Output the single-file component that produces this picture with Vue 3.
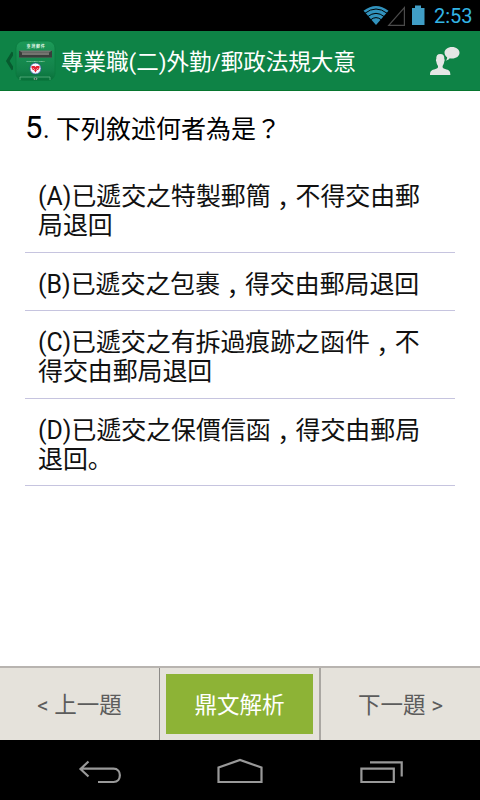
<script setup>
const options = [
  [['(A)', '已遞交之特製郵簡', '，', '不得交由郵'], ['', '局退回', '', '']],
  [['(B)', '已遞交之包裹', '，', '得交由郵局退回']],
  [['(C)', '已遞交之有拆過痕跡之函件', '，', '不'], ['', '得交由郵局退回', '', '']],
  [['(D)', '已遞交之保價信函', '，', '得交由郵局'], ['', '退回。', '', '']],
]
</script>

<template>
  <div class="screen">
    <div class="status">
      <svg class="status-icons" width="64" height="31" viewBox="0 0 64 31">
        <path fill="#3192bd" d="M0.500 10.800Q13 1.200 25.500 10.800L13 25Z" />
        <g fill="none" stroke="#000" stroke-width="1">
          <path d="M1.800 13.300Q13 4.700 24.200 13.300" />
          <path d="M4.600 16.700Q13 10 21.400 16.700" />
          <path d="M7.400 20Q13 15.200 18.600 20" />
        </g>
        <path fill="none" stroke="#4b4b4b" stroke-width="1.200" d="M41.400 7.500V25.300H25.700Z" />
        <path fill="#409ec6" d="M49 8h3V5.500h6V8h3.500v17H49Z" />
      </svg>
      <span class="clock">2:53</span>
    </div>

    <header class="bar">
      <svg class="chevron" width="12" height="20" viewBox="0 0 12 20">
        <path fill="none" stroke="#075b2f" stroke-width="3.200" d="M12 1.500L6.800 10L12 18.500" />
      </svg>
      <svg class="logo" width="42" height="42" viewBox="0 0 42 42">
        <defs>
          <linearGradient id="shell" x1="0" y1="0" x2="0" y2="1">
            <stop offset="0" stop-color="#1d9a58" />
            <stop offset=".75" stop-color="#128149" />
            <stop offset="1" stop-color="#087039" />
          </linearGradient>
        </defs>
        <rect x="1" y="1" width="39" height="39.500" rx="7" fill="url(#shell)" stroke="#0a793e" stroke-width=".7" />
        <text x="21" y="8" text-anchor="middle" font-size="4" font-weight="700" letter-spacing=".7" fill="#e5f7e9">臺灣郵件</text>
        <path fill="#71726f" d="M4 10.500h33v7H4Z" />
        <path fill="#393e3b" d="M4 10.500l3 2h27l3-2v7H4Z" />
        <path fill="#747570" d="M7 12.500h27V15H7Z" />
        <text x="20.500" y="22" text-anchor="middle" font-size="2.500" fill="#b8e2c6">ORDINARY MAIL</text>
        <circle cx="20.500" cy="28.500" r="5.500" fill="#f4f7fb" stroke="#284b9e" stroke-width=".7" />
        <path fill="#e32234" d="M16.500 26h3.200l.8 1 .8-1h3.200v2l-1 1v1h-1.500L20.500 32.500 19 30h-1.500v-1l-1-1Z" />
        <path stroke="#f1d9de" stroke-width=".6" d="M18 28l2 2M23 28l-2 2" />
        <path fill="none" stroke="#64b889" stroke-width=".7" d="M5 40v-3h30v3" />
        <ellipse cx="20.500" cy="38.700" rx="1.900" ry="1.200" fill="#8daf9a" />
        <circle cx="20.500" cy="38.900" r=".8" fill="#1b4e34" />
      </svg>
      <h1 class="title">專業職(二)外勤/郵政法規大意</h1>
      <svg class="user" width="32" height="32" viewBox="0 0 32 32">
        <path fill="#e5e6e5" d="M1 30c0-4 1.500-5 5.500-6 2-.6 2.700-1.200 2.500-3-1.200-1.500-1.400-2.800-1.600-4.200-.6-.8-.6-2.200-.1-2.700C7 10.800 8.300 9 11.300 9s4.300 1.800 4 5.100c.5.500.5 1.900-.1 2.700-.2 1.400-.5 2.700-1.600 4.200-.2 1.800.5 2.400 2.500 3 4 1 5.300 2 5.300 6Z" />
        <path fill="#e5e6e5" d="M23 2c4.300 0 7.500 2.500 7.500 5.700 0 3.300-3.200 5.800-7.500 5.800-.9 0-1.500-.1-2.300-.3-.9 1.300-2.200 2.100-4 2.500 1.200-1 1.500-2.100 1.400-3.400-1.500-1.100-2.600-2.700-2.600-4.600C15.500 4.500 18.700 2 23 2Z" />
      </svg>
    </header>

    <main class="content">
      <h2 class="question"><span class="number">5</span><span class="dot">.</span><span>下列敘述何者為是</span><span>？</span></h2>
      <ul class="options">
        <li v-for="(lines, i) in options" :key="i" class="option">
          <div v-for="(line, j) in lines" :key="j" class="line">
            <span v-if="line[0]">{{ line[0] }}</span><span>{{ line[1] }}</span><span v-if="line[2]" class="comma" lang="zh-TW">{{ line[2] }}</span><span v-if="line[3]">{{ line[3] }}</span>
          </div>
        </li>
      </ul>
    </main>

    <footer class="actions">
      <button class="step">&lt; 上一題</button>
      <div class="middle"><button class="explain">鼎文解析</button></div>
      <button class="step">下一題 &gt;</button>
    </footer>

    <nav class="system">
      <svg width="480" height="60" viewBox="0 0 480 60" fill="none" stroke="#999" stroke-width="2.200">
        <path d="M88.500 21.500L80.500 29L88.500 36.500M81 28.700H113.500C122 28.700 122 42 113.500 42H98" />
        <path d="M218.500 42V27.500L240 20L261.500 27.500V42Z" />
        <path d="M361.400 28.700H393.800V42H361.400ZM370 22.400H401.700V36.500" />
      </svg>
    </nav>
  </div>
</template>

<style>
body {
  margin: 0;
}
</style>

<style scoped>
.screen {
  display: flex;
  flex-direction: column;
  width: 480px;
  height: 800px;
  overflow: hidden;
  background: #fff;
  font-family: Roboto, "Noto Sans CJK JP", sans-serif;
}
.status {
  display: flex;
  height: 31px;
  background: #000;
  justify-content: flex-end;
  padding-right: 7px;
}
.status-icons {
  margin-right: 7px;
}
.clock {
  width: 39px;
  font-size: 20px;
  line-height: 32px;
  color: #33b5e5;
  white-space: nowrap;
}
.bar {
  display: flex;
  align-items: center;
  box-sizing: border-box;
  height: 60px;
  background: #0e8346;
  border-bottom: 1px solid #07762f;
}
.chevron {
  margin-left: 1px;
}
.logo {
  margin-left: 2px;
}
.title {
  margin: 0 0 0 4px;
  width: 368px;
  font-size: 22.500px;
  font-weight: 400;
  line-height: 30px;
  padding-top: 2px;
  color: #fff;
  white-space: nowrap;
}
.user {
  flex: none;
}
.content {
  flex: 1;
  padding: 0 25px;
}
.question {
  display: flex;
  align-items: baseline;
  height: 74px;
  margin: 0;
  font-size: 25px;
  font-weight: 400;
  line-height: 74px;
  color: #000;
  white-space: nowrap;
}
.number {
  width: 18px;
  font-size: 31px;
}
.dot {
  width: 13px;
}
.options {
  margin: 0;
  padding: 0;
  list-style: none;
}
.option {
  padding: 17px 13px 11px;
  border-bottom: 1px solid #c6c4df;
}
.line {
  display: flex;
  height: 29.350px;
  font-size: 24.900px;
  line-height: 29.350px;
  color: #111;
  white-space: nowrap;
}
.comma {
  margin-top: 8px;
  font-family: "Noto Sans CJK TC", sans-serif;
}
.actions {
  display: flex;
  box-sizing: border-box;
  height: 74px;
  border-top: 2px solid #b8b4b0;
  background: #e5e2db;
}
.step,
.explain {
  border: 0;
  padding: 0 0 2px;
  font-family: inherit;
  font-size: 22.500px;
}
.step {
  flex: 1;
  background: transparent;
  color: #5c5c5c;
}
.middle {
  display: flex;
  box-sizing: border-box;
  width: 162px;
  padding: 6px 6px 6px 6px;
  border-left: 1px solid #8c8a87;
  border-right: 2px solid #aaa7a2;
}
.explain {
  flex: 1;
  background: #8db336;
  color: #fff;
}
.system {
  height: 60px;
  background: #000;
}
</style>
